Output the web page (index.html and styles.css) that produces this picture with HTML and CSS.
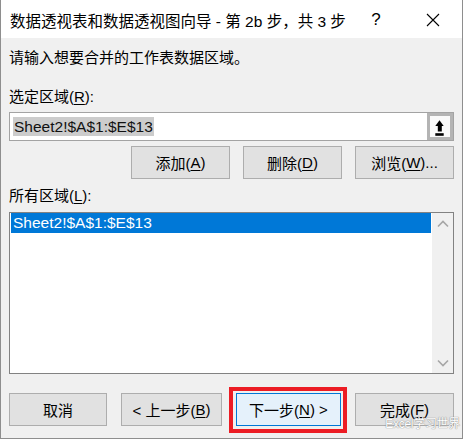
FILE: index.html
```html
<!DOCTYPE html>
<html lang="zh-CN">
<head>
<meta charset="utf-8">
<title>数据透视表和数据透视图向导</title>
<link rel="stylesheet" href="styles.css">
</head>
<body>
<div class="window">
  <div class="titlebar">
    <div class="title">数据透视表和数据透视图向导 - 第 2b 步，共 3 步</div>
    <div class="help">?</div>
    <div class="close">
      <svg width="14" height="14" viewBox="0 0 14 14"><path d="M1 1 L13 13 M13 1 L1 13" stroke="#000" stroke-width="1.1" fill="none"/></svg>
    </div>
  </div>
  <div class="content">
    <div class="prompt">请输入想要合并的工作表数据区域。</div>
    <div class="label label-first">选定区域(<u>R</u>):</div>
    <div class="inputbox">
      <span class="inputtext"><span class="sel">Sheet2!$A$1:$E$13</span></span>
      <div class="collapse">
        <svg width="20" height="22" viewBox="0 0 20 22"><path d="M5.3 10 L9.5 4.3 L13.7 10 Z" fill="#000"/><rect x="7.8" y="9.5" width="4" height="6" fill="#000"/><rect x="5.3" y="17.2" width="8.4" height="2.6" fill="#000"/></svg>
      </div>
    </div>
    <div class="btnrow">
      <div class="btn btn-w">添加(<u>A</u>)</div>
      <div class="btn btn-w">删除(<u>D</u>)</div>
      <div class="btn btn-w">浏览(<u>W</u>)...</div>
    </div>
    <div class="label label-second">所有区域(<u>L</u>):</div>
    <div class="listbox">
      <div class="items">
        <div class="item selected">Sheet2!$A$1:$E$13</div>
      </div>
      <div class="scrollbar">
        <svg width="14" height="10" viewBox="0 0 14 10"><path d="M2 7.5 L7 2.5 L12 7.5" stroke="#a6a6a6" stroke-width="1.6" fill="none"/></svg>
        <svg width="14" height="10" viewBox="0 0 14 10"><path d="M2 2.5 L7 7.5 L12 2.5" stroke="#a6a6a6" stroke-width="1.6" fill="none"/></svg>
      </div>
    </div>
    <div class="footer">
      <div class="btn b-cancel">取消</div>
      <div class="btn b-back">&lt; 上一步(<u>B</u>)</div>
      <div class="btn b-next">下一步(<u>N</u>) &gt;</div>
      <div class="btn b-finish">完成(<u>F</u>)</div>
    </div>
  </div>
  <div class="watermark">Excel学习世界</div>
</div>
</body>
</html>
```

FILE: styles.css
```css
* { box-sizing: border-box; }
html, body { margin: 0; padding: 0; background: #f0f0f0; }
body {
  font-family: "Liberation Sans", "Noto Sans CJK SC", sans-serif;
  color: #000;
}
.window {
  position: relative;
  width: 463px;
  height: 439px;
  border: 1px solid #8e8e8e;
  border-top: none;
  background: #f0f0f0;
  display: flex;
  flex-direction: column;
}
.titlebar {
  height: 38px;
  background: #fff;
  display: flex;
  align-items: center;
  padding-left: 9px;
}
.title {
  font-size: 15.5px;
  flex: 1;
  white-space: nowrap;
  padding-top: 2px;
}
.help {
  width: 30px;
  text-align: center;
  font-size: 17px;
  margin-right: 27px;
  padding-top: 1px;
}
.close {
  width: 30px;
  display: flex;
  justify-content: center;
  margin-right: 14px;
  padding-top: 2px;
}
.content {
  flex: 1;
  display: flex;
  flex-direction: column;
  padding: 0 8px;
  font-size: 15px;
}
.prompt {
  margin-top: 10px;
  line-height: 20px;
  height: 20px;
}
.label {
  line-height: 20px;
  height: 20px;
}
.label-first { margin-top: 19px; }
.label-second { margin-top: 7px; }
u { text-decoration-thickness: 1px; text-underline-offset: 2px; }
.inputbox {
  margin-top: 5px;
  height: 29px;
  background: #fff;
  border: 1px solid #a3a3a3;
  display: flex;
  align-items: stretch;
}
.inputtext {
  flex: 1;
  display: flex;
  align-items: center;
  padding-left: 3px;
}
.sel {
  background: #cccccc;
  font-size: 15.5px;
  line-height: 19px;
  padding: 0 1px;
  color: #111;
}
.collapse {
  width: 26px;
  border: 3px solid #b4b4b4;
  background: #fafafa;
  display: flex;
  align-items: center;
  justify-content: center;
}
.btnrow {
  margin-top: 5px;
  display: flex;
  justify-content: flex-end;
  gap: 13px;
}
.btn {
  height: 33px;
  background: #e1e1e1;
  border: 1px solid #adadad;
  display: flex;
  align-items: center;
  justify-content: center;
  white-space: nowrap;
  font-size: 15px;
}
.btn-w { width: 99px; }
.listbox {
  margin-top: 6px;
  height: 162px;
  background: #fff;
  border: 1px solid #828282;
  display: flex;
}
.items {
  flex: 1;
  padding: 0 1px;
}
.item {
  height: 20px;
  line-height: 20px;
  font-size: 15.5px;
  padding-left: 2px;
}
.selected {
  background: #0078d7;
  color: #fff;
}
.scrollbar {
  width: 21px;
  background: #f0f0f0;
  display: flex;
  flex-direction: column;
  justify-content: space-between;
  align-items: center;
  padding: 6px 0 5px;
}
.footer {
  margin-top: 19px;
  display: flex;
  justify-content: space-between;
}
.b-cancel { width: 98px; }
.b-back { width: 101px; }
.b-next {
  width: 105px;
  position: relative;
  background: #e5f1fb;
  border-color: #0078d7;
}
.b-next::after {
  content: "";
  position: absolute;
  left: -8px;
  top: -7px;
  right: -7px;
  bottom: -8px;
  border: 4px solid #ec1c24;
}
.b-finish { width: 99px; }
.watermark {
  position: absolute;
  right: 2px;
  bottom: 7px;
  font-size: 12px;
  color: #fff;
  letter-spacing: -0.3px;
  text-shadow: 0 0 1px #8a8a8a, 0 0 1px #8a8a8a;
}
```
